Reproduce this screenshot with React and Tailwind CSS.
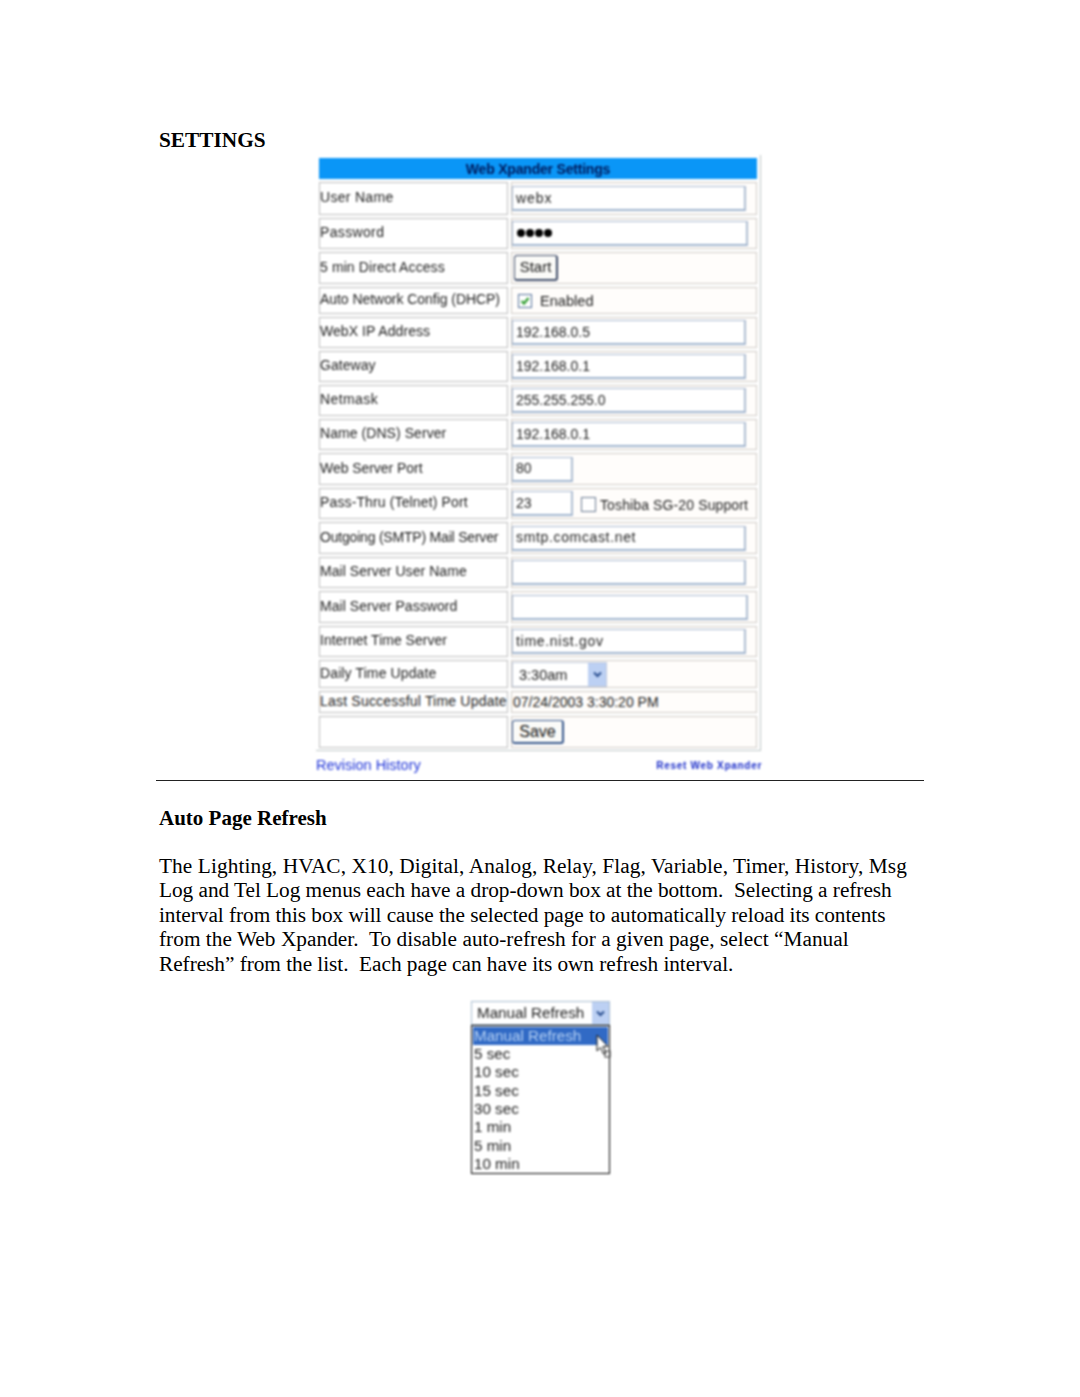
const sans = "font-['Liberation_Sans',Arial,sans-serif]";

function Field({ className, value, dots, tk = "" }) {
  return (
    <div className={`flex items-center pl-[3px] bg-white border border-[#a9b8d0] border-b-2 border-r-2 border-b-[#9fb4ce] border-r-[#aebed2] text-[#1c1c1c] text-[14px] ${tk} ${className}`}>
      {dots ? (
        <span className="flex gap-[1px] pl-[1px]">
          <i className="w-2 h-2 rounded-full bg-black" />
          <i className="w-2 h-2 rounded-full bg-black" />
          <i className="w-2 h-2 rounded-full bg-black" />
          <i className="w-2 h-2 rounded-full bg-black" />
        </span>
      ) : value}
    </div>
  );
}

function Btn({ className, children }) {
  return (
    <div className={`flex items-center justify-center bg-[#fbfbf8] border border-[#3c4a66] rounded-[3px] border-b-2 border-r-2 text-[15px] text-[#111] ${className}`}>
      {children}
    </div>
  );
}

function Chevron({ className }) {
  return (
    <div className={`flex items-center justify-center bg-[#bcd0f3] ${className}`}>
      <svg width="9" height="7" viewBox="0 0 9 7" fill="none" stroke="#2a4f90" strokeWidth="2">
        <path d="M1 1.5 L4.5 5 L8 1.5" />
      </svg>
    </div>
  );
}

function Row({ h, label, children, pad = "pl-0", tk = "tracking-[0.06px]" }) {
  return (
    <div className={`flex gap-[3px] ${h}`}>
      <div className={`w-[189px] shrink-0 flex items-center pl-0 pb-[2px] border border-[#bdbdbd] bg-white text-[14px] text-[#1c1c1c] whitespace-nowrap ${tk}`}>
        {label}
      </div>
      <div className={`flex-1 flex items-center border border-[#cfcac5] bg-[#fffdfb] ${pad}`}>{children}</div>
    </div>
  );
}

const full = "w-[234px] h-[25px]";

export default function App() {
  return (
    <div className="w-[1080px] h-[1397px] bg-white font-['Liberation_Serif','Times_New_Roman',serif] text-black overflow-hidden">
      <div className="pt-[127px] pl-[159px] text-[21.3px] leading-[26px] font-bold">SETTINGS</div>

      <div className="mt-[2px] ml-[316px] w-[445px] h-[596px] border-r border-b border-[#bcc6c6] [filter:blur(0.8px)]">
        <div className={`${sans} pt-[3px] pl-[3px] pr-[3px] flex flex-col gap-[3px]`}>
          <div className="h-[21px] pt-[1px] bg-[#0a96f7] flex items-center justify-center text-[14px] font-bold text-[#001a5c] tracking-[-0.2px]">
            Web Xpander Settings
          </div>
          <Row h="h-[33px]" label="User Name" tk="tracking-[0.3px]"><Field className={full} value="webx" tk="tracking-[0.9px]" /></Row>
          <Row h="h-[31px]" label="Password" tk="tracking-[0.35px]"><Field className="w-[236px] h-[25px]" dots /></Row>
          <Row h="h-[32px]" label="5 min Direct Access" pad="pl-[2px]" tk="tracking-[0.1px]"><Btn className="w-[44px] h-[26px]">Start</Btn></Row>
          <Row h="h-[27px]" label="Auto Network Config (DHCP)" pad="pl-[6px]" tk="tracking-[-0.05px]">
            <div className="w-[14px] h-[14px] border border-[#54709a] bg-white flex items-center justify-center">
              <svg width="10" height="10" viewBox="0 0 10 10" fill="none" stroke="#36a036" strokeWidth="2.4">
                <path d="M1.5 5 L4 7.5 L8.5 2" />
              </svg>
            </div>
            <span className="ml-[8px] mt-[2px] text-[14.6px] text-[#1c1c1c]">Enabled</span>
          </Row>
          <Row h="h-[31px]" label="WebX IP Address"><Field className={full} value="192.168.0.5" /></Row>
          <Row h="h-[31px]" label="Gateway"><Field className={full} value="192.168.0.1" /></Row>
          <Row h="h-[31px]" label="Netmask" tk="tracking-[0.4px]"><Field className={full} value="255.255.255.0" /></Row>
          <Row h="h-[31px]" label="Name (DNS) Server"><Field className={full} value="192.168.0.1" /></Row>
          <Row h="h-[32px]" label="Web Server Port" tk="tracking-[-0.05px]"><Field className="w-[61px] h-[25px]" value="80" /></Row>
          <Row h="h-[31px]" label="Pass-Thru (Telnet) Port" tk="tracking-[0.13px]">
            <Field className="w-[61px] h-[25px]" value="23" />
            <div className="ml-[8px] mt-[2px] w-[15px] h-[15px] border border-[#6a7a92] bg-white" />
            <span className="ml-[4px] mt-[4px] text-[14px] text-[#1c1c1c] whitespace-nowrap tracking-[0.12px]">Toshiba SG-20 Support</span>
          </Row>
          <Row h="h-[32px]" label="Outgoing (SMTP) Mail Server" tk="tracking-[-0.2px]"><Field className={full} value="smtp.comcast.net" tk="tracking-[0.65px]" /></Row>
          <Row h="h-[31px]" label="Mail Server User Name"><Field className={full} value="" /></Row>
          <Row h="h-[32px]" label="Mail Server Password"><Field className="w-[236px] h-[25px]" value="" /></Row>
          <Row h="h-[31px]" label="Internet Time Server" tk="tracking-[0px]"><Field className={full} value="time.nist.gov" tk="tracking-[0.7px]" /></Row>
          <Row h="h-[28px]" label="Daily Time Update" tk="tracking-[0.12px]">
            <div className="w-[95px] h-[25px] flex border border-[#c0cadc] bg-white text-[14.5px] text-[#1c1c1c]">
              <span className="flex-1 pl-[6px] leading-[24px]">3:30am</span>
              <Chevron className="w-[18px]" />
            </div>
          </Row>
          <Row h="h-[22px]" label="Last Successful Time Update" tk="tracking-[0.2px]">
            <span className="pl-[1px] text-[14px] text-[#1c1c1c]">07/24/2003 3:30:20 PM</span>
          </Row>
          <Row h="h-[32px]" label="">
            <Btn className="w-[52px] h-[24px] text-[16px] border-[#34558a]">Save</Btn>
          </Row>
        </div>
      </div>

      <div className={`${sans} ml-[316px] w-[446px] h-[28px] pt-[1px] flex items-center justify-between [filter:blur(0.8px)]`}>
        <span className="text-[14.5px] text-[#1f34d8]">Revision History</span>
        <span className="text-[10px] font-bold text-[#1a2cc8] tracking-[0.7px]">Reset Web Xpander</span>
      </div>

      <div className="ml-[156px] w-[768px] h-[1px] bg-[#222] mt-[1px]" />

      <div className="mt-[25px] pl-[159px] text-[21px] leading-[24px] font-bold">Auto Page Refresh</div>

      <div className="mt-[24px] pl-[159px] w-[920px] text-[21.3px] leading-[24.4px] whitespace-pre">
        <div className="tracking-[0.09px]">The Lighting, HVAC, X10, Digital, Analog, Relay, Flag, Variable, Timer, History, Msg</div>
        <div className="tracking-[-0.035px]">Log and Tel Log menus each have a drop-down box at the bottom.  Selecting a refresh</div>
        <div className="tracking-[-0.045px]">interval from this box will cause the selected page to automatically reload its contents</div>
        <div className="tracking-[0.03px]">from the Web Xpander.  To disable auto-refresh for a given page, select “Manual</div>
        <div className="tracking-[-0.04px]">Refresh” from the list.  Each page can have its own refresh interval.</div>
      </div>

      <div className={`${sans} relative mt-[25px] ml-[471px] w-[139px] [filter:blur(0.8px)] text-[15.2px] text-[#1c1c1c]`}>
        <div className="h-[24px] flex border border-[#a8bcd0] bg-white">
          <span className="flex-1 pl-[5px] leading-[22px]">Manual Refresh</span>
          <Chevron className="w-[17px]" />
        </div>
        <div className="h-[149px] border-[1.5px] border-[#000] bg-white pt-[1px] pl-[1px] pr-[1px]">
          <div className="h-[18px] bg-[#316ac5] text-[#b4d0f4] pl-[1px] leading-[18px]">Manual Refresh</div>
          {["5 sec", "10 sec", "15 sec", "30 sec", "1 min", "5 min", "10 min"].map((t) => (
            <div key={t} className="h-[18.3px] pl-[1px] leading-[18.3px] whitespace-nowrap">{t}</div>
          ))}
        </div>
        <svg className="absolute left-[125px] top-[33px]" width="15" height="25" viewBox="0 0 15 25">
          <path d="M1 1 L1 17 L4.5 13.5 L7.5 20 L10 19 L7 12.5 L12 12.5 Z" fill="#fff" stroke="#111" strokeWidth="1" />
          <rect x="9" y="17" width="5" height="6" fill="none" stroke="#333" strokeWidth="1" />
        </svg>
      </div>
    </div>
  );
}
